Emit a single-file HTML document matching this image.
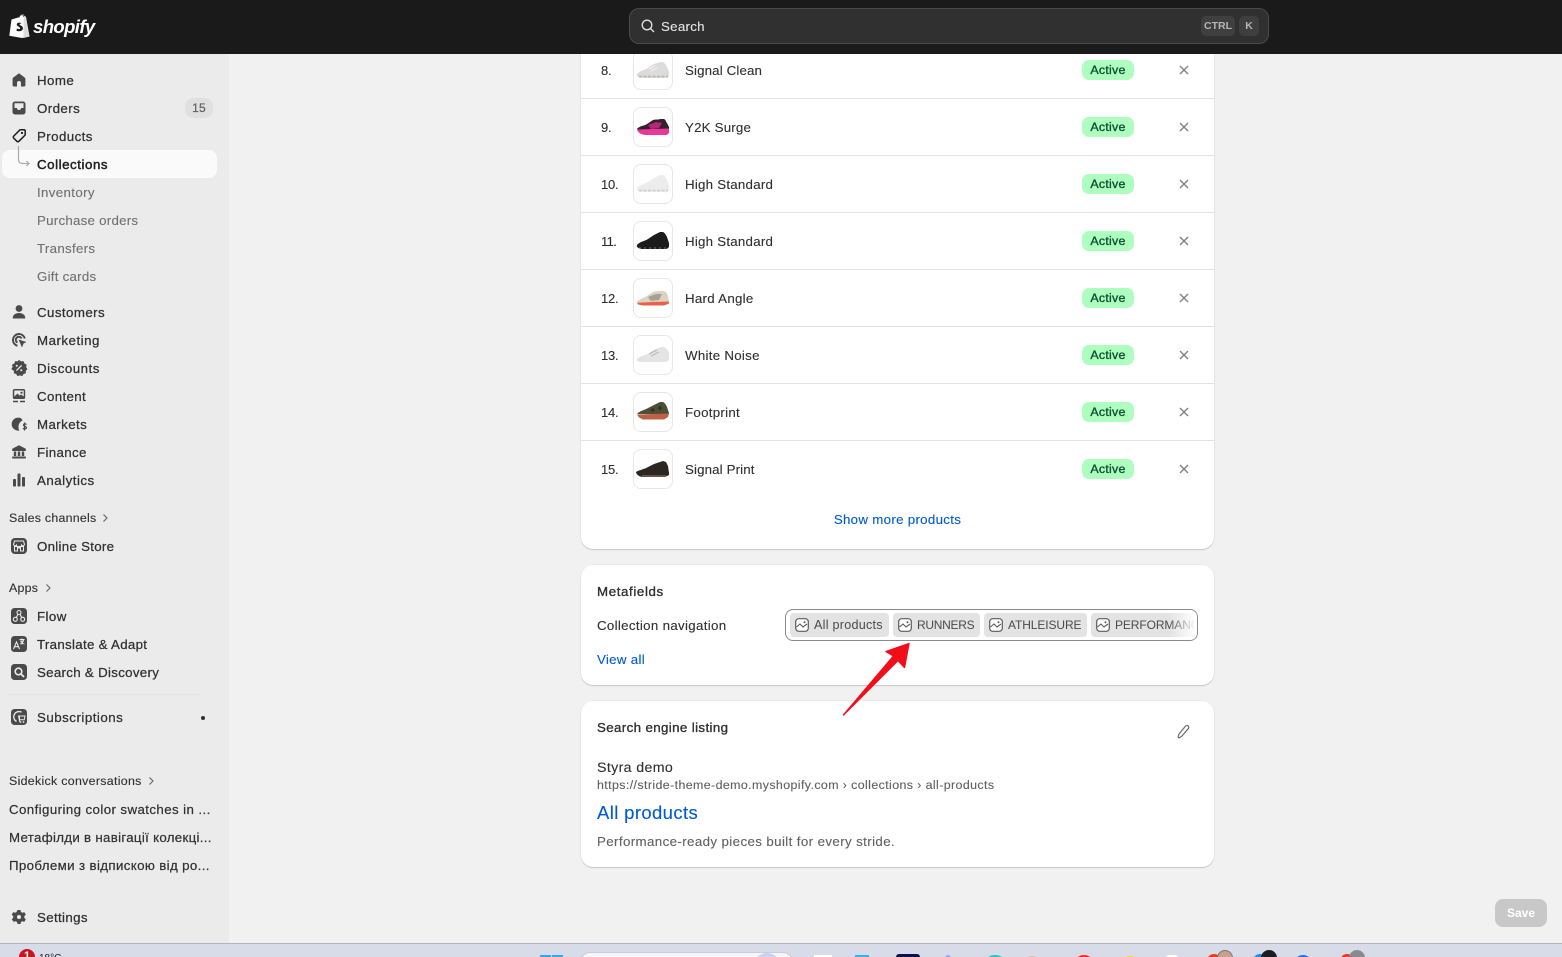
<!DOCTYPE html>
<html lang="en">
<head>
<meta charset="utf-8">
<title>Collection</title>
<style>
*{box-sizing:border-box}
html,body{margin:0;padding:0;width:1562px;height:957px;overflow:hidden;background:#f1f1f1;font-family:"Liberation Sans","Noto Sans CJK SC",sans-serif;color:#303030}
.a,.t,svg.i{position:absolute}
.t{white-space:nowrap;line-height:20px;font-size:13.3px;letter-spacing:.25px;margin-top:1px;-webkit-text-stroke:.12px currentColor}
#top{position:absolute;left:0;top:0;width:1562px;height:54px;background:#1a1a1a;z-index:5}
#side{position:absolute;left:0;top:54px;width:229px;height:889px;background:#ebebeb}
.sub{color:#707070}
.m{color:#303030;-webkit-text-stroke:.25px #303030;letter-spacing:.42px}
.sec{font-size:12.4px;letter-spacing:.32px;margin-top:0}
#tb{position:absolute;left:0;top:943px;width:1562px;height:14px;background:#d8dce8;border-top:1px solid #b2b4bf;overflow:hidden;z-index:6}
.card{position:absolute;left:581px;width:633px;background:#fff;box-shadow:0 1px 1px rgba(0,0,0,.16),0 0 0 .5px rgba(0,0,0,.05)}
.line{position:absolute;left:581px;width:633px;height:1px;background:#e3e3e3}
.thumb{position:absolute;left:633px;width:40px;height:40px;background:#fff;border:1px solid #e6e6e6;border-radius:8px}
.thumb svg{position:absolute;left:2px;top:9px;width:34px;height:20px}
.badge{position:absolute;left:1082px;width:52px;height:20px;border-radius:7px;background:#aefebf;color:#0c5132;font-size:12.4px;line-height:20px;text-align:center;letter-spacing:.25px;-webkit-text-stroke:.35px #0c5132}
.x{position:absolute;left:1179px;width:10px;height:10px}
.num{left:601px;letter-spacing:-.25px;font-size:13px}
.name{left:685px;letter-spacing:.28px}
.chip{position:absolute;top:613px;height:24px;background:#e3e3e3;border-radius:4px;font-size:12.6px;line-height:24px;color:#4a4a4a;white-space:nowrap;padding-left:24px;letter-spacing:.2px;overflow:hidden}
.up{font-size:12px;letter-spacing:0}
.chip svg{position:absolute;left:5px;top:5px;width:14px;height:14px}
</style>
</head>
<body>

<div id="side"></div>

<!-- Main product list card -->
<div class="card" style="top:54px;height:495px;border-radius:0 0 12px 12px"></div>
<div class="line" style="top:98px"></div>
<div class="line" style="top:155px"></div>
<div class="line" style="top:212px"></div>
<div class="line" style="top:269px"></div>
<div class="line" style="top:326px"></div>
<div class="line" style="top:383px"></div>
<div class="line" style="top:440px"></div>

<!-- Row 8 -->
<div class="t num" style="top:60px">8.</div>
<div class="thumb" style="top:50px"><svg viewBox="0 0 34 20"><path d="M1 14C3 11 9 10 12 8L18 4C20 3 22 3 24 2H27C29 3 30 5 31 7L33 12V15C33 17 31 18 29 18H6C3 18 0 16 1 14Z" fill="#dcdcdc"/><path d="M13 9l6-3M15 11l6-3" stroke="#f4f4f4" stroke-width="1.200"/><path d="M3 16.500H32" stroke="#bdb6ad" stroke-width="1.800" stroke-dasharray="3 1.500"/></svg></div>
<div class="t name" style="top:60px;letter-spacing:.14px">Signal Clean</div>
<div class="badge" style="top:60px">Active</div>
<svg class="x" style="top:65px" viewBox="0 0 10 10"><path d="M1 1l8 8M9 1 1 9" stroke="#808080" stroke-width="1.400" fill="none"/></svg>

<!-- Row 9 -->
<div class="t num" style="top:117px">9.</div>
<div class="thumb" style="top:107px"><svg viewBox="0 0 34 20"><path d="M1 12C3 9 8 9 11 7L17 3C20 2 22 3 24 2H28C30 3 30 5 31 6L33 10V13H2Z" fill="#33222c"/><path d="M12 8l8-3 6 1-3 5-8 1z" fill="#b02a76"/><path d="M1 12.500 33 11.500V15C33 17 31 18 29 18H10C6 18 2 16 1 12.500Z" fill="#e9379b"/></svg></div>
<div class="t name" style="top:117px;letter-spacing:.2px">Y2K Surge</div>
<div class="badge" style="top:117px">Active</div>
<svg class="x" style="top:122px" viewBox="0 0 10 10"><path d="M1 1l8 8M9 1 1 9" stroke="#808080" stroke-width="1.400" fill="none"/></svg>

<!-- Row 10 -->
<div class="t num" style="top:174px">10.</div>
<div class="thumb" style="top:164px"><svg viewBox="0 0 34 20"><path d="M1 14C3 11 9 10 12 8L18 4C20 3 22 2 24 1H27C29 2 30 4 31 6L33 12V15C33 17 31 18 29 18H6C3 18 0 16 1 14Z" fill="#ececec"/><path d="M3 16.500H32" stroke="#cfcfcf" stroke-width="1.800" stroke-dasharray="3 1.500"/></svg></div>
<div class="t name" style="top:174px;letter-spacing:.24px">High Standard</div>
<div class="badge" style="top:174px">Active</div>
<svg class="x" style="top:179px" viewBox="0 0 10 10"><path d="M1 1l8 8M9 1 1 9" stroke="#808080" stroke-width="1.400" fill="none"/></svg>

<!-- Row 11 -->
<div class="t num" style="top:231px;letter-spacing:-.6px">11.</div>
<div class="thumb" style="top:221px"><svg viewBox="0 0 34 20"><path d="M1 14C3 11 9 10 12 8L18 4C20 3 22 2 24 1H27C29 2 30 4 31 6L33 12V15C33 17 31 18 29 18H6C3 18 0 16 1 14Z" fill="#1c1c1c"/><path d="M3 17H32" stroke="#6f6f6f" stroke-width="1.100" stroke-dasharray="2 3"/></svg></div>
<div class="t name" style="top:231px;letter-spacing:.24px">High Standard</div>
<div class="badge" style="top:231px">Active</div>
<svg class="x" style="top:236px" viewBox="0 0 10 10"><path d="M1 1l8 8M9 1 1 9" stroke="#808080" stroke-width="1.400" fill="none"/></svg>

<!-- Row 12 -->
<div class="t num" style="top:288px">12.</div>
<div class="thumb" style="top:278px"><svg viewBox="0 0 34 20"><path d="M1 14C3 11 8 10 11 8L17 4C20 3 24 3 27 3L30 4 32 8 33 14H2Z" fill="#dcd3c3"/><path d="M12 9l8-3 6 0-3 6-8 1z" fill="#a8a091"/><path d="M1 14.500 33 13.500V15.500L28 17.500H7L2 16.500Z" fill="#e8624a"/></svg></div>
<div class="t name" style="top:288px">Hard Angle</div>
<div class="badge" style="top:288px">Active</div>
<svg class="x" style="top:293px" viewBox="0 0 10 10"><path d="M1 1l8 8M9 1 1 9" stroke="#808080" stroke-width="1.400" fill="none"/></svg>

<!-- Row 13 -->
<div class="t num" style="top:345px">13.</div>
<div class="thumb" style="top:335px"><svg viewBox="0 0 34 20"><path d="M1 14C3 11 9 11 13 8L19 4C22 3 25 2 28 2L31 4 33 8V15L30 17H6C3 17 0 16 1 14Z" fill="#e4e4e4"/><path d="M13 9l8-4M15 11l8-4" stroke="#b8b8b8" stroke-width="1"/></svg></div>
<div class="t name" style="top:345px">White Noise</div>
<div class="badge" style="top:345px">Active</div>
<svg class="x" style="top:350px" viewBox="0 0 10 10"><path d="M1 1l8 8M9 1 1 9" stroke="#808080" stroke-width="1.400" fill="none"/></svg>

<!-- Row 14 -->
<div class="t num" style="top:402px">14.</div>
<div class="thumb" style="top:392px"><svg viewBox="0 0 34 20"><path d="M1 12C3 9 9 8 12 6L18 3C20 2 22 1 24 0H27C29 1 30 3 31 5L33 11V12H2Z" fill="#4d4f35"/><path d="M14 8l3-2 2 2-2 2zM22 5l3-1 1 3-3 1z" fill="#2f3122"/><path d="M1 12.500 33 11.500 32 15 28 17.500H7L3 15.500Z" fill="#bd6046"/></svg></div>
<div class="t name" style="top:402px">Footprint</div>
<div class="badge" style="top:402px">Active</div>
<svg class="x" style="top:407px" viewBox="0 0 10 10"><path d="M1 1l8 8M9 1 1 9" stroke="#808080" stroke-width="1.400" fill="none"/></svg>

<!-- Row 15 -->
<div class="t num" style="top:459px">15.</div>
<div class="thumb" style="top:449px"><svg viewBox="0 0 34 20"><path d="M0 13C3 11 9 10 12 8L18 5C21 4 24 3 27 2L30 3 32 7 33 14V16L29 18H7C3 18 0 15 0 13Z" fill="#2b2622"/><path d="M6 17H30" stroke="#8d6f5a" stroke-width="1.200"/></svg></div>
<div class="t name" style="top:459px;letter-spacing:.13px">Signal Print</div>
<div class="badge" style="top:459px">Active</div>
<svg class="x" style="top:464px" viewBox="0 0 10 10"><path d="M1 1l8 8M9 1 1 9" stroke="#808080" stroke-width="1.400" fill="none"/></svg>

<div class="t" style="left:581px;width:633px;text-align:center;top:509px;color:#005bd3;letter-spacing:.3px">Show more products</div>

<!-- Metafields -->
<div class="card" style="top:565px;height:120px;border-radius:12px"></div>
<div class="t m" style="left:597px;top:581px;letter-spacing:.62px;-webkit-text-stroke:.35px #303030">Metafields</div>
<div class="t" style="left:597px;top:615px;letter-spacing:.32px">Collection navigation</div>
<div class="a" style="left:785px;top:609px;width:413px;height:32px;border:1px solid #8a8a8a;border-radius:8px;background:#fff"></div>
<div class="chip" style="left:790px;width:99px;letter-spacing:.25px">All products<svg viewBox="0 0 14 14"><rect x=".7" y=".7" width="12.6" height="12.6" rx="3" fill="#fff" stroke="#5c5c5c" stroke-width="1.2"/><path d="M1.5 9 5 6l3 3 4-3" fill="none" stroke="#5c5c5c" stroke-width="1.1"/><circle cx="9.5" cy="4.2" r="1" fill="#5c5c5c"/></svg></div>
<div class="chip up" style="left:893px;width:87px;letter-spacing:-.28px">RUNNERS<svg viewBox="0 0 14 14"><rect x=".7" y=".7" width="12.6" height="12.6" rx="3" fill="#fff" stroke="#5c5c5c" stroke-width="1.2"/><path d="M1.5 9 5 6l3 3 4-3" fill="none" stroke="#5c5c5c" stroke-width="1.1"/><circle cx="9.5" cy="4.2" r="1" fill="#5c5c5c"/></svg></div>
<div class="chip up" style="left:984px;width:103px;letter-spacing:-.1px">ATHLEISURE<svg viewBox="0 0 14 14"><rect x=".7" y=".7" width="12.6" height="12.6" rx="3" fill="#fff" stroke="#5c5c5c" stroke-width="1.2"/><path d="M1.5 9 5 6l3 3 4-3" fill="none" stroke="#5c5c5c" stroke-width="1.1"/><circle cx="9.5" cy="4.2" r="1" fill="#5c5c5c"/></svg></div>
<div class="chip up" style="left:1091px;width:106px;border-radius:4px 7px 7px 4px;letter-spacing:-.1px">PERFORMANCE<svg viewBox="0 0 14 14"><rect x=".7" y=".7" width="12.6" height="12.6" rx="3" fill="#fff" stroke="#5c5c5c" stroke-width="1.2"/><path d="M1.5 9 5 6l3 3 4-3" fill="none" stroke="#5c5c5c" stroke-width="1.1"/><circle cx="9.5" cy="4.2" r="1" fill="#5c5c5c"/></svg></div>
<div class="a" style="left:1169px;top:610px;width:28px;height:30px;background:linear-gradient(90deg,rgba(255,255,255,0),#fff 95%);border-radius:0 7px 7px 0"></div>
<div class="t" style="left:597px;top:649px;color:#005bd3;letter-spacing:.3px">View all</div>

<!-- SEO -->
<div class="card" style="top:701px;height:166px;border-radius:12px"></div>
<div class="t m" style="left:597px;top:717px;letter-spacing:.38px;-webkit-text-stroke:.35px #303030">Search engine listing</div>
<svg class="i" style="left:1175px;top:723.500px;width:16px;height:16px" viewBox="0 0 16 16"><path d="M10.4 2.2a1.9 1.9 0 0 1 2.9 2.500L6.600 12.400l-2.600 1.500-.9-.8.7-2.800z" fill="none" stroke="#6b6b6b" stroke-width="1.200" stroke-linejoin="round"/></svg>
<div class="t" style="left:597px;top:757px;font-size:14.200px;letter-spacing:.36px;color:#303030">Styra demo</div>
<div class="t" style="left:597px;top:774px;font-size:12.400px;letter-spacing:.4px;color:#616161">https://stride-theme-demo.myshopify.com › collections › all-products</div>
<div class="t" style="left:597px;top:802px;font-size:18.500px;letter-spacing:.37px;color:#005bd3">All products</div>
<div class="t" style="left:597px;top:831px;letter-spacing:.39px;color:#616161">Performance-ready pieces built for every stride.</div>

<!-- Arrow -->
<svg class="i" style="left:0;top:0;width:1562px;height:957px;pointer-events:none" viewBox="0 0 1562 957"><path d="M843.500 715 893.500 656 886 651.500 909 643.500 904.500 667.500 898 660.500 Z" fill="#f20d1a" stroke="#f20d1a" stroke-width="1.400" stroke-linejoin="round"/></svg>

<!-- Save -->
<div class="a" style="left:1495px;top:899px;width:52px;height:28px;background:#c8c8c8;border-radius:8px;color:#fff;font-size:12px;font-weight:700;line-height:28px;text-align:center">Save</div>

<!-- Sidebar -->
<div class="a" style="left:2px;top:150px;width:215px;height:28px;background:#fafafa;border-radius:8px"></div>

<svg class="i" style="left:11px;top:72px;width:16px;height:16px" viewBox="0 0 16 16"><path d="M8 1.200 13.800 5.600a1.500 1.500 0 0 1 .6 1.200V13a1.500 1.500 0 0 1-1.500 1.500H10V11a2 2 0 0 0-4 0V14.500H3.100A1.500 1.500 0 0 1 1.600 13V6.800A1.500 1.500 0 0 1 2.200 5.600z" fill="#4a4a4a"/></svg>
<div class="t m" style="left:37px;top:70px">Home</div>

<svg class="i" style="left:11px;top:100px;width:16px;height:16px" viewBox="0 0 16 16"><path d="M4 1.500h8a2.500 2.500 0 0 1 2.500 2.500v8a2.500 2.500 0 0 1-2.500 2.500H4A2.500 2.500 0 0 1 1.500 12V4A2.500 2.500 0 0 1 4 1.500z" fill="#4a4a4a"/><path d="M3.500 3.200h9V8H10a2 2 0 0 1-4 0H3.500z" fill="#ebebeb"/></svg>
<div class="t m" style="left:37px;top:98px">Orders</div>
<div class="a" style="left:185px;top:98px;width:28px;height:20px;border-radius:8px;background:#e0e0e0;color:#616161;font-size:12px;line-height:20px;text-align:center;letter-spacing:.2px;-webkit-text-stroke:.2px #616161">15</div>

<svg class="i" style="left:11px;top:128px;width:16px;height:16px" viewBox="0 0 16 16"><path d="M9.600 1.800h3.300A1.300 1.300 0 0 1 14.200 3.100v3.300a1.400 1.400 0 0 1-.4 1L7.900 13.300a1.400 1.400 0 0 1-2 0L2.700 10.100a1.400 1.400 0 0 1 0-2L8.600 2.200A1.400 1.400 0 0 1 9.600 1.800z" fill="none" stroke="#1c1c1c" stroke-width="1.500"/><circle cx="11" cy="5" r="1.100" fill="#1c1c1c"/></svg>
<div class="t m" style="left:37px;top:126px">Products</div>

<svg class="i" style="left:16px;top:146px;width:16px;height:24px" viewBox="0 0 16 24"><path d="M2.500 0v14a3.500 3.500 0 0 0 3.500 3.500h7M10.500 15l2.500 2.500-2.500 2.500" fill="none" stroke="#ababab" stroke-width="1.200"/></svg>
<div class="t" style="left:37px;top:154px;color:#202020;-webkit-text-stroke:.45px #202020;letter-spacing:.55px">Collections</div>

<div class="t sub" style="left:37px;top:182px;letter-spacing:.35px">Inventory</div>
<div class="t sub" style="left:37px;top:210px">Purchase orders</div>
<div class="t sub" style="left:37px;top:238px;letter-spacing:.3px">Transfers</div>
<div class="t sub" style="left:37px;top:266px">Gift cards</div>

<svg class="i" style="left:11px;top:304px;width:16px;height:16px" viewBox="0 0 16 16"><circle cx="8" cy="4.500" r="3.400" fill="#4a4a4a"/><path d="M1.800 14.500v-1C1.800 11 4.500 9 8 9s6.200 2 6.200 4.500v1z" fill="#4a4a4a"/></svg>
<div class="t m" style="left:37px;top:302px">Customers</div>

<svg class="i" style="left:11px;top:332px;width:16px;height:16px" viewBox="0 0 16 16"><path d="M13.800 6.500A6 6 0 1 0 6.500 13.800M10.500 6.500A3 3 0 1 0 6.500 10.500" fill="none" stroke="#4a4a4a" stroke-width="1.900"/><path d="M7.500 7.500 15.500 10l-3 1.500L11 15.500z" fill="#4a4a4a"/></svg>
<div class="t m" style="left:37px;top:330px;letter-spacing:.5px">Marketing</div>

<svg class="i" style="left:10px;top:359px;width:18px;height:18px" viewBox="0 0 16 16"><path d="M8 .8l1.800 1.300 2.200-.2.800 2.100 2 1-.5 2.200L15.500 9l-1.500 1.500.1 2.200-2.100.6-1.100 1.900-2.100-.7-2.100.7-1.200-1.900-2.100-.6.100-2.200L1.100 9l1.200-1.800-.5-2.200 2-1 .8-2.100 2.200.2z" fill="#4a4a4a"/><path d="M10.300 5.700l-4.600 4.600" stroke="#ebebeb" stroke-width="1.100"/><circle cx="6" cy="6" r=".9" fill="#ebebeb"/><circle cx="10" cy="10" r=".9" fill="#ebebeb"/></svg>
<div class="t m" style="left:37px;top:358px;letter-spacing:.5px">Discounts</div>

<svg class="i" style="left:11px;top:388px;width:16px;height:16px" viewBox="0 0 16 16"><rect x="1.800" y="1" width="12.400" height="10" rx="1.800" fill="#4a4a4a"/><path d="M3.300 8.500 6.500 5.500l2 2 1.500-1 2.700 2v-6h-9.400z" fill="#ebebeb"/><circle cx="10.500" cy="4.700" r="1.100" fill="#4a4a4a"/><path d="M2 13.500h5M9 13.500h5" stroke="#4a4a4a" stroke-width="1.400"/></svg>
<div class="t m" style="left:37px;top:386px;letter-spacing:.35px">Content</div>

<svg class="i" style="left:11px;top:416px;width:17px;height:16px" viewBox="0 0 17 16"><path d="M10 2.300A6.500 6.500 0 1 0 8.500 14.500c-.8-1-1-2-1-3.500 0-2.500 1-5 4-6.500A6.500 6.500 0 0 0 10 2.300z" fill="#4a4a4a"/><path d="M15.500 8.500c-.5-.8-2.800-1-3 .5s3 1 2.900 2.800c-.1 1.300-2.800 1.500-3.400.3M13.500 6.500v8" fill="none" stroke="#4a4a4a" stroke-width="1.200"/></svg>
<div class="t m" style="left:37px;top:414px;letter-spacing:.42px">Markets</div>

<svg class="i" style="left:11px;top:444px;width:16px;height:16px" viewBox="0 0 16 16"><path d="M8 1.200 14.800 4.800v2.200H1.200V4.800z" fill="#4a4a4a"/><path d="M2.800 7.500h2.400v4.500H2.800zM6.800 7.500h2.400v4.500H6.800zM10.800 7.500h2.400v4.500h-2.400zM1.200 12.500h13.600v2H1.200z" fill="#4a4a4a"/></svg>
<div class="t m" style="left:37px;top:442px;letter-spacing:.35px">Finance</div>

<svg class="i" style="left:11px;top:472px;width:16px;height:16px" viewBox="0 0 16 16"><rect x="2" y="7" width="3" height="7.500" rx=".8" fill="#4a4a4a"/><rect x="6.500" y="1.500" width="3" height="13" rx=".8" fill="#4a4a4a"/><rect x="11" y="5" width="3" height="9.500" rx=".8" fill="#4a4a4a"/></svg>
<div class="t m" style="left:37px;top:470px;letter-spacing:.5px">Analytics</div>

<div class="t sec" style="left:9px;top:508px;letter-spacing:.24px">Sales channels</div>
<svg class="i" style="left:101px;top:513px;width:8px;height:10px" viewBox="0 0 8 10"><path d="M2.500 1.500 6 5 2.500 8.500" fill="none" stroke="#616161" stroke-width="1.100"/></svg>

<svg class="i" style="left:11px;top:538px;width:16px;height:16px" viewBox="0 0 16 16"><rect width="16" height="16" rx="4" fill="#4a4a4a"/><path d="M3.500 3h9l1 3.500a1.700 1.700 0 0 1-3 .6 1.900 1.900 0 0 1-5 0 1.700 1.700 0 0 1-3-.6zM3.500 8.500h9v4.500h-3v-3h-3v3h-3z" fill="none" stroke="#ebebeb" stroke-width="1"/></svg>
<div class="t m" style="left:37px;top:536px;letter-spacing:.28px">Online Store</div>

<div class="t sec" style="left:9px;top:578px;letter-spacing:.25px">Apps</div>
<svg class="i" style="left:44px;top:583px;width:8px;height:10px" viewBox="0 0 8 10"><path d="M2.500 1.500 6 5 2.500 8.500" fill="none" stroke="#616161" stroke-width="1.100"/></svg>

<svg class="i" style="left:11px;top:608px;width:16px;height:16px" viewBox="0 0 16 16"><rect width="16" height="16" rx="3.500" fill="#4a4a4a"/><g fill="none" stroke="#ebebeb" stroke-width="1.100"><circle cx="8" cy="4.500" r="2"/><circle cx="4.300" cy="11.300" r="2"/><circle cx="11.700" cy="11.300" r="2"/><path d="M7 6.300 5.300 9.500M9 6.300l1.700 3.200"/></g></svg>
<div class="t m" style="left:37px;top:606px">Flow</div>

<svg class="i" style="left:11px;top:636px;width:16px;height:16px" viewBox="0 0 16 16"><rect width="16" height="16" rx="3.500" fill="#4a4a4a"/><path d="M2.500 13 5.500 6l3 7M3.700 10.700h3.600" fill="none" stroke="#ebebeb" stroke-width="1.100"/><path d="M11 2.500v6M8.500 3.500h5M12.800 3.500c-.3 2-2 3.800-3.800 4.500M9.500 4.500c.5 1.500 2 3 4 3.500" fill="none" stroke="#ebebeb" stroke-width=".9"/></svg>
<div class="t m" style="left:37px;top:634px;letter-spacing:.3px">Translate &amp; Adapt</div>

<svg class="i" style="left:11px;top:664px;width:16px;height:16px" viewBox="0 0 16 16"><rect width="16" height="16" rx="3.500" fill="#4a4a4a"/><circle cx="7.500" cy="7.500" r="3.300" fill="none" stroke="#ebebeb" stroke-width="1.600"/><path d="M10 10l3 3" stroke="#ebebeb" stroke-width="1.800"/></svg>
<div class="t m" style="left:37px;top:662px;letter-spacing:.3px">Search &amp; Discovery</div>

<div class="a" style="left:9px;top:694px;width:190px;height:1px;background:#e3e3e3"></div>

<svg class="i" style="left:11px;top:709px;width:16px;height:16px" viewBox="0 0 16 16"><rect width="16" height="16" rx="3.500" fill="#4a4a4a"/><path d="M10.500 3.200A5 5 0 0 0 5.500 12.500" fill="none" stroke="#ebebeb" stroke-width="1.300"/><path d="M7.500 7h6.500l-.8 3.800H8.300zM8.500 7.600v5" fill="none" stroke="#ebebeb" stroke-width="1"/><circle cx="9.500" cy="13" r=".9" fill="#ebebeb"/><circle cx="12.500" cy="13" r=".9" fill="#ebebeb"/></svg>
<div class="t m" style="left:37px;top:707px;letter-spacing:.5px">Subscriptions</div>
<div class="a" style="left:201px;top:716px;width:4px;height:4px;border-radius:50%;background:#303030"></div>

<div class="t sec" style="left:9px;top:771px;letter-spacing:.3px">Sidekick conversations</div>
<svg class="i" style="left:147px;top:776px;width:8px;height:10px" viewBox="0 0 8 10"><path d="M2.500 1.500 6 5 2.500 8.500" fill="none" stroke="#616161" stroke-width="1.100"/></svg>

<div class="t" style="left:9px;top:799px;letter-spacing:.4px;-webkit-text-stroke:.2px #303030">Configuring color swatches in ...</div>
<div class="t" style="left:9px;top:827px;letter-spacing:.3px;-webkit-text-stroke:.2px #303030">Метафілди в навігації колекці...</div>
<div class="t" style="left:9px;top:855px;letter-spacing:.36px;-webkit-text-stroke:.2px #303030">Проблеми з відпискою від ро...</div>

<svg class="i" style="left:11px;top:909px;width:16px;height:16px" viewBox="0 0 16 16"><path d="M6.500 1h3l.5 2 1.300.7 2-.6 1.500 2.600-1.500 1.400v1.800l1.500 1.400-1.500 2.600-2-.6-1.300.7-.5 2h-3l-.5-2-1.300-.7-2 .6L.7 10.300l1.500-1.400V7.100L.7 5.700l1.500-2.600 2 .6L5.500 3z" fill="#4a4a4a"/><circle cx="8" cy="8" r="2" fill="#ebebeb"/></svg>
<div class="t m" style="left:37px;top:907px;letter-spacing:.35px">Settings</div>

<!-- Top bar -->
<div id="top">
  <svg class="i" style="left:9px;top:14px;width:21px;height:24px" viewBox="0 0 21 24"><path d="M2.500 5.500 10 3.200c.5-1.800 1.800-3 3.200-3 1.200 0 2 1 2.300 2l1.300.3L20.500 22.500 13 24 .3 21.800z" fill="#fbfbfb"/><path d="M14.700 2.800 17 3l3.500 19.500-6 1.500z" fill="#dcdcdc"/><path d="M11.700 8.900c-.7-.4-3.600-.8-3.900 1.300-.3 2.200 3.700 2.500 3.400 4.200-.2 1-1.900 1-3.200.1l-.6 2.100c2.500 1.200 6.300.8 6.500-2.200.2-2.800-3.600-3.100-3.400-4.200.1-.7 1.200-.7 2-.3z" fill="#1a1a1a"/><path d="M10 3.500c.3-1.500 1.300-2.700 2.700-2.700 1 0 1.800.8 2 2" fill="none" stroke="#1a1a1a" stroke-width=".7"/></svg>
  <div class="t" style="left:33px;top:14px;line-height:24px;font-size:18.500px;font-weight:700;font-style:italic;color:#fff;letter-spacing:-.6px;-webkit-text-stroke:0">shopify</div>
  <div class="a" style="left:629px;top:8px;width:640px;height:36px;background:#303030;border:1px solid #4a4a4a;border-radius:10px"></div>
  <svg class="i" style="left:640px;top:18px;width:16px;height:16px" viewBox="0 0 16 16"><circle cx="7" cy="7" r="4.800" fill="none" stroke="#e3e3e3" stroke-width="1.300"/><path d="M10.500 10.500 14 14" stroke="#e3e3e3" stroke-width="1.300"/></svg>
  <div class="t" style="left:661px;top:16px;color:#e3e3e3;letter-spacing:.28px">Search</div>
  <div class="a" style="left:1201px;top:16px;width:34px;height:20px;border-radius:5px;background:#3f3f3f;color:#b5b5b5;font-size:10.500px;line-height:20px;text-align:center;letter-spacing:0;font-weight:700">CTRL</div>
  <div class="a" style="left:1239px;top:16px;width:20px;height:20px;border-radius:5px;background:#3f3f3f;color:#b5b5b5;font-size:10.500px;line-height:20px;text-align:center;font-weight:700">K</div>
</div>

<!-- Taskbar -->
<div id="tb">
  <div class="a" style="left:19px;top:5px;width:16px;height:16px;border-radius:50%;background:#c4161c;color:#fff;font-size:11px;line-height:14px;text-align:center;font-weight:700">1</div>
  <div class="a" style="left:39px;top:9px;font-size:10px;line-height:12px;color:#1c1c1c">18°C</div>
  <div class="a" style="left:540px;top:11px;width:11px;height:6px;background:#3ba6ec"></div>
  <div class="a" style="left:552px;top:11px;width:11px;height:6px;background:#3ba6ec"></div>
  <div class="a" style="left:580px;top:8px;width:213px;height:20px;background:#f6f6f8;border:1px solid #c9ccd8;border-radius:10px"></div>
  <div class="a" style="left:756px;top:9px;width:22px;height:16px;border-radius:50%;background:#cdd0ef"></div>
  <div class="a" style="left:814px;top:11px;width:18px;height:8px;background:#fff"></div>
  <div class="a" style="left:855px;top:11px;width:14px;height:8px;background:#3bb0e8"></div>
  <div class="a" style="left:896px;top:10px;width:24px;height:8px;background:#0d1150;border-radius:3px"></div>
  <div class="a" style="left:945px;top:11px;width:6px;height:8px;background:#9aa0f0;border-radius:50%"></div>
  <div class="a" style="left:987px;top:11px;width:16px;height:8px;background:#2cc4c4;border-radius:50%"></div>
  <div class="a" style="left:1026px;top:12px;width:12px;height:8px;background:#d6c09a;border-radius:50%"></div>
  <div class="a" style="left:1077px;top:11px;width:14px;height:8px;background:#ee2b2b;border-radius:50%"></div>
  <div class="a" style="left:1127px;top:12px;width:6px;height:6px;background:#f2d92a"></div>
  <div class="a" style="left:1166px;top:11px;width:12px;height:8px;background:#fff;border-radius:3px"></div>
  <div class="a" style="left:1207px;top:10px;width:14px;height:14px;background:#ec3a1e;border-radius:50%"></div>
  <div class="a" style="left:1217px;top:6px;width:16px;height:16px;background:#c7a090;border-radius:50%;border:1px solid #777"></div>
  <div class="a" style="left:1253px;top:10px;width:14px;height:14px;background:#1f8bf0;border-radius:50%"></div>
  <div class="a" style="left:1261px;top:6px;width:16px;height:16px;background:#1c1c22;border-radius:50%"></div>
  <div class="a" style="left:1295px;top:11px;width:16px;height:14px;background:#1c74e8;border-radius:50%"></div>
  <div class="a" style="left:1340px;top:10px;width:14px;height:14px;background:#ec3a1e;border-radius:50%"></div>
  <div class="a" style="left:1349px;top:6px;width:16px;height:16px;background:#8a8a8e;border-radius:50%"></div>
</div>

</body>
</html>
